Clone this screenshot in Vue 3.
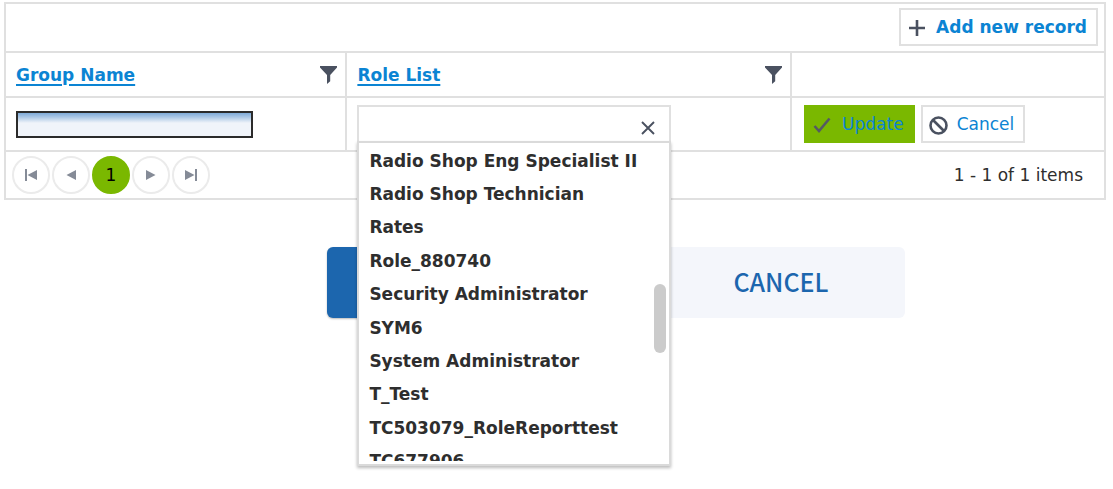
<script setup>
import { ref } from 'vue'

const groupName = ref('')
const roleQuery = ref('')
const roles = [
  'Radio Shop Eng Specialist II',
  'Radio Shop Technician',
  'Rates',
  'Role_880740',
  'Security Administrator',
  'SYM6',
  'System Administrator',
  'T_Test',
  'TC503079_RoleReporttest',
  'TC677906',
]
</script>

<template>
  <main class="page">
    <section class="grid">
      <div class="toolbar">
        <button type="button" class="btn add">
          <svg width="16" height="16" viewBox="0 0 16 16" aria-hidden="true"><path d="M8 0v16M0 8h16" stroke="#4a5160" stroke-width="2.6" /></svg>
          <span>Add new record</span>
        </button>
      </div>
      <table>
        <colgroup>
          <col class="col-group" />
          <col class="col-role" />
          <col />
        </colgroup>
        <thead>
          <tr>
            <th>
              <div class="head">
                <a href="#">Group Name</a>
                <button type="button" class="filter" aria-label="Filter Group Name">
                  <svg width="17" height="18" viewBox="0 0 17 18" aria-hidden="true"><path d="M0 0h17v1.6L10.2 9v6.2L7 18V9L0 1.6z" fill="#4a5160" /></svg>
                </button>
              </div>
            </th>
            <th>
              <div class="head">
                <a href="#">Role List</a>
                <button type="button" class="filter" aria-label="Filter Role List">
                  <svg width="17" height="18" viewBox="0 0 17 18" aria-hidden="true"><path d="M0 0h17v1.6L10.2 9v6.2L7 18V9L0 1.6z" fill="#4a5160" /></svg>
                </button>
              </div>
            </th>
            <th></th>
          </tr>
        </thead>
        <tbody>
          <tr>
            <td><input v-model="groupName" class="name" type="text" aria-label="Group Name" /></td>
            <td>
              <div class="combo">
                <div class="combo-box">
                  <input v-model="roleQuery" type="text" aria-label="Role List" />
                  <button type="button" class="clear" aria-label="Clear">
                    <svg width="14" height="14" viewBox="0 0 14 14" aria-hidden="true"><path d="M1 1l12 12M13 1L1 13" stroke="#4a5160" stroke-width="1.9" /></svg>
                  </button>
                </div>
                <div class="popup">
                  <ul class="roles" role="listbox" aria-label="Roles">
                    <li v-for="role in roles" :key="role" role="option">{{ role }}</li>
                  </ul>
                  <span class="thumb"></span>
                </div>
              </div>
            </td>
            <td>
              <div class="actions">
                <button type="button" class="btn update">
                  <svg width="18" height="16" viewBox="0 0 18 16" aria-hidden="true"><path d="M1.500 9l4.500 5L16.500 1.500" fill="none" stroke="#555a62" stroke-width="2.6" /></svg>
                  <span>Update</span>
                </button>
                <button type="button" class="btn cancel-row">
                  <svg width="19" height="19" viewBox="0 0 19 19" aria-hidden="true"><circle cx="9.5" cy="9.5" r="8" fill="none" stroke="#4a5160" stroke-width="2.6" /><path d="M4 4l11 11" stroke="#4a5160" stroke-width="2.6" /></svg>
                  <span>Cancel</span>
                </button>
              </div>
            </td>
          </tr>
        </tbody>
      </table>
      <footer class="pager">
        <nav class="pages" aria-label="Pages">
          <button type="button" aria-label="First page">
            <svg width="12" height="12" viewBox="0 0 12 12" fill="#858b97" aria-hidden="true"><path d="M0 0h2v12H0zM12 1v10L2.500 6z" /></svg>
          </button>
          <button type="button" aria-label="Previous page">
            <svg width="12" height="12" viewBox="0 0 12 12" fill="#858b97" aria-hidden="true"><path d="M11 1v10L1.500 6z" /></svg>
          </button>
          <button type="button" class="current">1</button>
          <button type="button" aria-label="Next page">
            <svg width="12" height="12" viewBox="0 0 12 12" fill="#858b97" aria-hidden="true"><path d="M1 1v10l9.500-5z" /></svg>
          </button>
          <button type="button" aria-label="Last page">
            <svg width="12" height="12" viewBox="0 0 12 12" fill="#858b97" aria-hidden="true"><path d="M0 1v10l9.500-5zM10 0h2v12h-2z" /></svg>
          </button>
        </nav>
        <span class="info">1 - 1 of 1 items</span>
      </footer>
    </section>
    <div class="form-actions">
      <button type="button" class="save" aria-label="Save"></button>
      <button type="button" class="cancel">CANCEL</button>
    </div>
  </main>
</template>

<style>
body {
  background: #fff;
}
</style>

<style scoped>
.page {
  box-sizing: border-box;
  min-height: 100vh;
  padding: 2px 7px 0 4px;
  font-family: "DejaVu Sans", Verdana, sans-serif;
  font-size: 17px;
  color: #2e2e2e;
}
.page * {
  box-sizing: border-box;
}
button,
input {
  margin: 0;
  font-family: inherit;
  font-size: inherit;
}
.grid {
  border: 2px solid #e0e0e0;
}
.toolbar {
  display: flex;
  justify-content: flex-end;
  padding: 4px 6px 5px;
}
.btn {
  display: flex;
  align-items: center;
  height: 38px;
  padding: 0 9px 0 8px;
  border: 2px solid #e0e0e0;
  background: #fff;
  color: #0b84d3;
  white-space: nowrap;
}
.btn svg {
  position: relative;
  top: 1px;
}
.add {
  gap: 11px;
  font-weight: 700;
}
table {
  width: 100%;
  table-layout: fixed;
  border-collapse: collapse;
}
.col-group {
  width: 31%;
}
.col-role {
  width: 40.5%;
}
th,
td {
  padding: 0 10px;
  border-top: 2px solid #e0e0e0;
  text-align: left;
}
th {
  height: 45px;
}
td {
  height: 53px;
}
th + th,
td + td {
  border-left: 2px solid #e0e0e0;
}
.head {
  display: flex;
  align-items: center;
  justify-content: space-between;
}
.head a {
  color: #0b84d3;
  text-decoration-thickness: 2px;
  text-underline-offset: 3px;
}
.filter,
.clear {
  display: flex;
  padding: 0;
  border: 0;
  background: none;
}
.filter {
  margin-right: -2px;
}
.name {
  display: block;
  width: 237px;
  height: 27px;
  border: 2px solid #2b2b2b;
  background: linear-gradient(#7fabd8, #a9c6e5 4px, #f0f4fa 10px);
}
.combo {
  position: relative;
  width: 314px;
}
.combo-box {
  display: flex;
  align-items: center;
  height: 38px;
  padding: 6px 14px 0 10px;
  border: 2px solid #e0e0e0;
  border-bottom: 0;
}
.combo-box input {
  flex: 1;
  min-width: 0;
  border: 0;
  outline: 0;
  background: none;
}
.popup {
  position: absolute;
  top: 36px;
  left: 0;
  width: 100%;
  padding: 1px 0 4px;
  border: 2px solid #dadada;
  background: #fff;
  box-shadow: 0 2px 3px #0004;
}
.roles {
  display: grid;
  grid-template-rows: repeat(10, 1fr);
  height: 334px;
  margin: 0 0 -18px;
  padding: 0 10px;
  list-style: none;
  clip-path: inset(0 0 17px);
  font-weight: 700;
}
.roles li {
  display: flex;
  align-items: center;
  white-space: nowrap;
}
.thumb {
  position: absolute;
  top: 141px;
  right: 3px;
  width: 12px;
  height: 69px;
  border-radius: 6px;
  background: #cbcbcb;
}
.actions {
  display: flex;
  gap: 6px;
  padding-left: 2px;
}
.update {
  gap: 11px;
  padding-left: 7px;
  border-color: #7ab800;
  background: #7ab800;
}
.cancel-row {
  gap: 9px;
  padding-left: 6px;
}
.pager {
  display: flex;
  align-items: center;
  justify-content: space-between;
  padding: 4px 21px 4px 6px;
  border-top: 2px solid #e0e0e0;
}
.pages {
  display: flex;
  gap: 2px;
}
.pages button {
  display: flex;
  align-items: center;
  justify-content: center;
  width: 38px;
  height: 38px;
  padding: 0;
  border: 2px solid #ebebeb;
  border-radius: 50%;
  background: #fff;
}
.pages .current {
  border-color: #7ab800;
  background: #7ab800;
  color: #000;
}
.form-actions {
  display: flex;
  justify-content: center;
  gap: 82px;
  margin-top: 47px;
  padding-left: 122px;
}
.form-actions button {
  width: 248px;
  height: 71px;
  border: 0;
  border-radius: 6px;
}
.save {
  background: #1c66ae;
  box-shadow: 0 1px 2px #0004;
}
.form-actions .cancel {
  padding: 0 0 4px;
  background: #f4f6fb;
  color: #1c66ae;
  font-family: "Noto Sans CJK JP", "Noto Sans", sans-serif;
  font-size: 25px;
  font-weight: 500;
}
</style>
